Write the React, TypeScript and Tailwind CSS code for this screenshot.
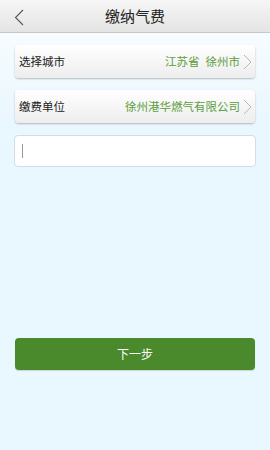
const font = { fontFamily: '"Noto Sans CJK SC", "Noto Sans", sans-serif' }

function Chevron() {
  return (
    <svg width="9" height="16" viewBox="0 0 9 16" className="ml-[3px] shrink-0">
      <path d="M1 1 L8 8 L1 15" fill="none" stroke="#b8b8b8" strokeWidth="1" />
    </svg>
  )
}

function Row({ label, value }: { label: string; value: React.ReactNode }) {
  return (
    <div className="flex h-[33px] items-center rounded-[4px] bg-gradient-to-b from-white to-[#ededed] pl-[4px] pr-[3px] shadow-[0_1px_2px_rgba(0,0,0,0.25)]">
      <span className="text-[11.5px] text-[#222]">{label}</span>
      <span className="ml-auto text-[11.5px] text-[#5c9d3c]">{value}</span>
      <Chevron />
    </div>
  )
}

export default function App() {
  return (
    <div className="flex h-[450px] w-[270px] flex-col bg-[#e9f7fe]" style={font}>
      <div className="relative flex h-[33px] items-center justify-center border-b border-[#c8c8c8] bg-gradient-to-b from-[#f6f6f6] to-[#e4e4e4]">
        <svg width="10" height="17" viewBox="0 0 10 17" className="absolute left-[14px] top-[9px]">
          <path d="M9 1 L1.5 8.5 L9 16" fill="none" stroke="#555" strokeWidth="1.1" />
        </svg>
        <span className="text-[15px] text-[#222]">缴纳气费</span>
      </div>
      <div className="flex flex-col bg-gradient-to-b from-[#f7fcff] to-[#e9f7fe] px-[15px] pt-[12px]">
        <Row
          label="选择城市"
          value={
            <>
              江苏省<span className="ml-[6px]">徐州市</span>
            </>
          }
        />
        <div className="mt-[12px]">
          <Row label="缴费单位" value="徐州港华燃气有限公司" />
        </div>
      </div>
      <div className="px-[14px] pt-[12px]">
        <div className="flex h-[32px] items-center rounded-[4px] border border-[#d6dde2] bg-white pl-[7px]">
          <div className="h-[14px] w-[1px] bg-[#999]" />
        </div>
      </div>
      <div className="px-[15px] pt-[171px]">
        <button className="flex h-[32px] w-full items-center justify-center rounded-[4px] bg-[#4a8a2c] text-[12px] text-white shadow-[0_1px_1px_rgba(0,0,0,0.15)]">
          下一步
        </button>
      </div>
    </div>
  )
}
